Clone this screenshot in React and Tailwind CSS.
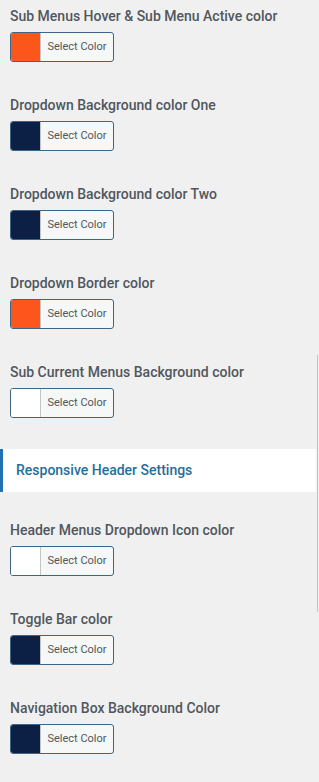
import React from 'react'

const groupOne = [
  { label: 'Sub Menus Hover & Sub Menu Active color', color: 'bg-[#fd561c]' },
  { label: 'Dropdown Background color One', color: 'bg-[#0c1f45]' },
  { label: 'Dropdown Background color Two', color: 'bg-[#0c1f45]' },
  { label: 'Dropdown Border color', color: 'bg-[#fd561c]' },
  { label: 'Sub Current Menus Background color', color: 'bg-white' },
]

const groupTwo = [
  { label: 'Header Menus Dropdown Icon color', color: 'bg-white' },
  { label: 'Toggle Bar color', color: 'bg-[#0c1f45]' },
  { label: 'Navigation Box Background Color', color: 'bg-[#0c1f45]' },
]

function ColorControl({ label, color }) {
  return (
    <div className="h-[89px] pt-[7px] pl-[10px]">
      <p className="text-[14px] leading-[18px] font-medium text-[#50575e] whitespace-nowrap">{label}</p>
      <button className="mt-[7px] flex h-[30px] w-[104px] overflow-hidden rounded-[3px] border border-[#3e6584] bg-[#f6f7f7]">
        <span className={`h-full w-[30px] border-r border-[#c3c4c7] ${color}`}></span>
        <span className="flex-1 text-[11px] leading-[28px] text-[#50575e] text-center">Select Color</span>
      </button>
    </div>
  )
}

export default function App() {
  return (
    <div className="relative w-[319px] h-[782px] overflow-hidden bg-[#f0f0f1]" style={{ fontFamily: 'Roboto, "Liberation Sans", sans-serif' }}>
      <div className="absolute right-[1px] top-[355px] h-[257px] w-px bg-[#c3c4c7]"></div>
      {groupOne.map((item) => (
        <ColorControl key={item.label} {...item} />
      ))}
      <div className="mt-[4px] mb-[22px] mr-[3px] h-[43px] border-l-[3px] border-[#2271b1] bg-white pl-[13px]">
        <h3 className="text-[14px] leading-[43px] font-medium text-[#1f6f9c]">Responsive Header Settings</h3>
      </div>
      {groupTwo.map((item) => (
        <ColorControl key={item.label} {...item} />
      ))}
    </div>
  )
}
